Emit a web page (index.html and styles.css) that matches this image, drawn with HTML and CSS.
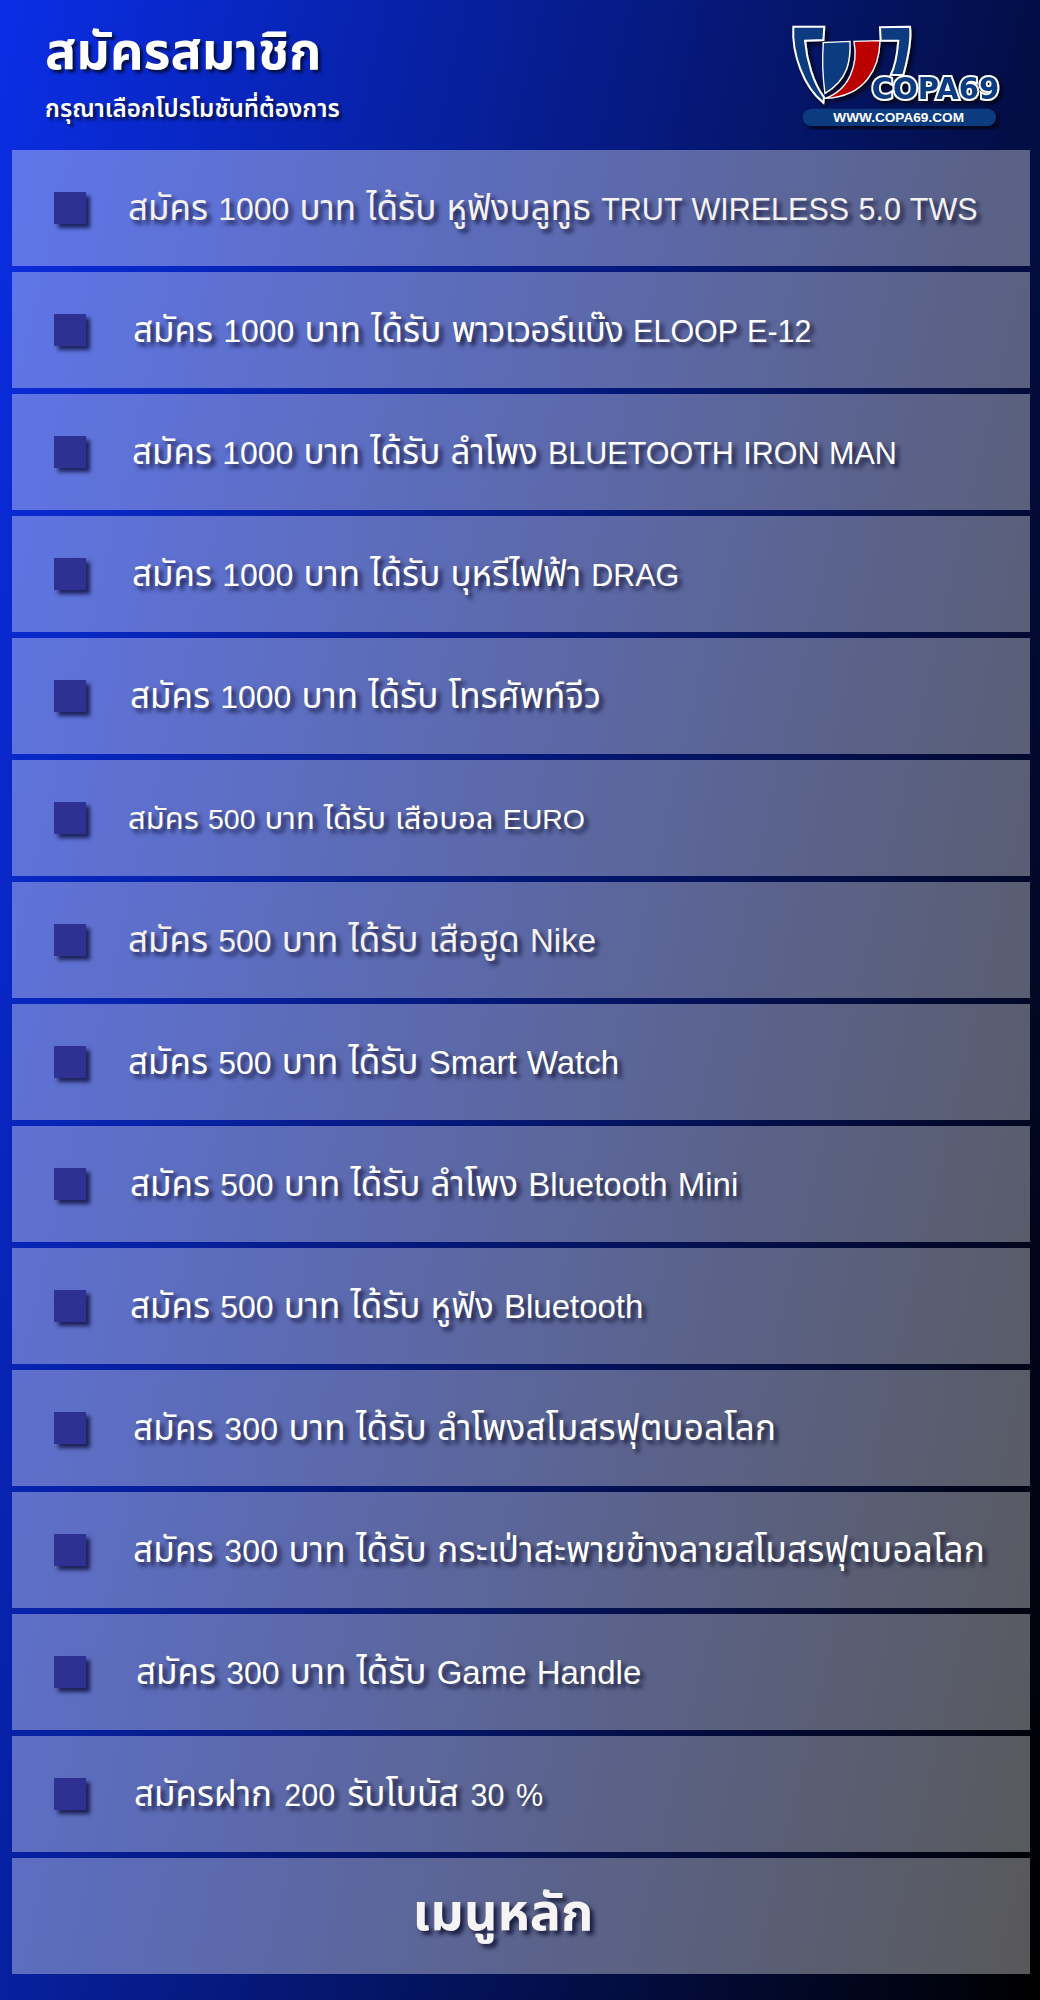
FILE: index.html
```html
<!DOCTYPE html>
<html lang="th">
<head>
<meta charset="utf-8">
<title>สมัครสมาชิก</title>
<link rel="stylesheet" href="styles.css">
</head>
<body>
<header class="head">
  <div class="titles">
    <h1 class="title">สมัครสมาชิก</h1>
    <p class="sub">กรุณาเลือกโปรโมชันที่ต้องการ</p>
  </div>
  <svg class="logo" width="260" height="130" viewBox="0 0 780 390">
    <defs>
      <filter id="ds" x="-10%" y="-10%" width="125%" height="130%"><feDropShadow dx="9" dy="9" stdDeviation="8" flood-color="#000" flood-opacity=".75"/></filter>
    </defs>
    <g filter="url(#ds)">
      <path class="cup" d="M100 50L193 50L190 90L135 92C140 150 160 220 192 262L190 278C130 230 95 130 100 50Z"/>
      <path class="cup" d="M450 50L360 52L362 92L415 92C412 130 405 170 392 195L430 195C445 140 455 90 450 50Z"/>
      <path class="cup thin" d="M190 98L270 94C272 150 265 210 195 250C188 200 186 150 190 98Z"/>
      <path class="red" d="M282 94L360 92C358 170 320 260 195 265C270 240 295 160 282 94Z"/>
    </g>
    <text class="logo-name" x="335" y="268" textLength="383" lengthAdjust="spacingAndGlyphs" filter="url(#ds)">COPA69</text>
    <rect class="pill" x="128" y="296" width="580" height="52" rx="26" filter="url(#ds)"/>
    <text class="logo-url" x="220" y="336" textLength="392" lengthAdjust="spacingAndGlyphs">WWW.COPA69.COM</text>
  </svg>
</header>
<main class="rows">
  <a class="row"><span class="sq"></span><span class="t t1 soft">สมัคร <span class="num">1000</span> บาท ได้รับ หูฟังบลูทูธ <span class="caps">TRUT WIRELESS 5.0 TWS</span></span></a>
  <a class="row"><span class="sq"></span><span class="t t2">สมัคร <span class="num">1000</span> บาท ได้รับ <span class="narrow">พาวเวอร์แบ๊ง</span> <span class="caps">ELOOP E-12</span></span></a>
  <a class="row"><span class="sq"></span><span class="t t3">สมัคร <span class="num">1000</span> บาท ได้รับ ลำโพง <span class="caps">BLUETOOTH IRON MAN</span></span></a>
  <a class="row"><span class="sq"></span><span class="t t3">สมัคร <span class="num">1000</span> บาท ได้รับ บุหรีไฟฟ้า <span class="caps">DRAG</span></span></a>
  <a class="row"><span class="sq"></span><span class="t t4">สมัคร <span class="num">1000</span> บาท ได้รับ โทรศัพท์จีว</span></a>
  <a class="row"><span class="sq"></span><span class="t t1 small">สมัคร <span class="num-s">500</span> บาท ได้รับ เสือบอล <span class="num-s">EURO</span></span></a>
  <a class="row"><span class="sq"></span><span class="t t1 soft">สมัคร <span class="num">500</span> บาท ได้รับ เสือฮูด <span class="en">Nike</span></span></a>
  <a class="row"><span class="sq"></span><span class="t t1">สมัคร <span class="num">500</span> บาท ได้รับ <span class="en">Smart Watch</span></span></a>
  <a class="row"><span class="sq"></span><span class="t t4">สมัคร <span class="num">500</span> บาท ได้รับ ลำโพง <span class="en">Bluetooth Mini</span></span></a>
  <a class="row"><span class="sq"></span><span class="t t4">สมัคร <span class="num">500</span> บาท ได้รับ หูฟัง <span class="en">Bluetooth</span></span></a>
  <a class="row"><span class="sq"></span><span class="t t2 wide">สมัคร <span class="num">300</span> บาท ได้รับ ลำโพงสโมสรฟุตบอลโลก</span></a>
  <a class="row"><span class="sq"></span><span class="t t2 wide">สมัคร <span class="num">300</span> บาท ได้รับ กระเป่าสะพายข้างลายสโมสรฟุตบอลโลก</span></a>
  <a class="row"><span class="sq"></span><span class="t t5">สมัคร <span class="num">300</span> บาท ได้รับ <span class="en">Game Handle</span></span></a>
  <a class="row"><span class="sq"></span><span class="t t6">สมัครฝาก <span class="caps">200</span> รับโบนัส <span class="caps">30 %</span></span></a>
  <a class="row menu">เมนูหลัก</a>
</main>
</body>
</html>
```
FILE: styles.css
```css
html, body { margin: 0; padding: 0; }
body {
  width: 1040px;
  height: 2000px;
  overflow: hidden;
  background: linear-gradient(103deg, #0a2ee6 0%, #000 100%);
  font-family: Tahoma, "Noto Sans Thai", "Noto Sans", "DejaVu Sans", sans-serif;
  color: #fff;
}
.head {
  height: 150px;
  padding: 0 20px 0 45px;
  box-sizing: border-box;
  display: flex;
  justify-content: space-between;
  align-items: flex-start;
}
.titles { padding-top: 18px; }
.title {
  margin: 0;
  font-size: 52px;
  line-height: 70px;
  font-weight: 700;
  text-shadow: 3px 3px 3px #00104a;
}
.sub {
  margin: 7px 0 0;
  font-size: 24.2px;
  line-height: 30px;
  font-weight: 600;
  text-shadow: 3px 3px 3px #00104a;
}
.logo { margin-top: 10px; flex: none; }
.cup { fill: #0a3a80; stroke: #fff; stroke-width: 6px; }
.thin { stroke-width: 4px; }
.red { fill: #bb0000; stroke: #fff; stroke-width: 4px; }
.pill { fill: #0a3a80; }
.logo-name {
  font: 700 92px "DejaVu Sans", sans-serif;
  fill: #0a3a80;
  stroke: #fff;
  stroke-width: 12px;
  paint-order: stroke;
}
.logo-url {
  font: 700 37px "Liberation Sans", sans-serif;
  fill: #fff;
}
.rows {
  display: flex;
  flex-direction: column;
  gap: 6px;
  margin: 0 10px 0 12px;
}
.row {
  height: 116px;
  box-sizing: border-box;
  display: flex;
  align-items: center;
  background: rgba(255, 255, 255, .35);
}
.sq {
  width: 32px;
  height: 32px;
  margin-left: 42px;
  flex: none;
  background: #2e3192;
  box-shadow: 4px 4px 4px rgba(0, 0, 40, .7);
}
.t {
  font-size: 35px;
  word-spacing: 1px;
  padding-top: 2px;
  white-space: nowrap;
  color: #fff;
  text-shadow: 4px 4px 4px rgba(0, 0, 30, .7);
}
.en, .caps, .num, .num-s { font-family: "Liberation Sans", sans-serif; }
.en { font-size: 33px; }
.caps { font-size: 30.5px; }
.narrow { letter-spacing: -.8px; }
.wide { letter-spacing: .2px; }
.num { font-size: 32px; }
.num-s { font-size: 28.5px; }
.soft { color: #f4f1f1; }
.t1 { margin-left: 42px; }
.t2 { margin-left: 47px; }
.t3 { margin-left: 46px; }
.t4 { margin-left: 44px; }
.t5 { margin-left: 50px; }
.t6 { margin-left: 48px; word-spacing: 3px; }
.small { font-size: 31px; }
.menu {
  justify-content: center;
  padding: 0 36px 4px 0;
  font-size: 52px;
  font-weight: 700;
  color: #f6f4f4;
  text-shadow: 4px 4px 4px rgba(0, 0, 30, .7);
}
```
